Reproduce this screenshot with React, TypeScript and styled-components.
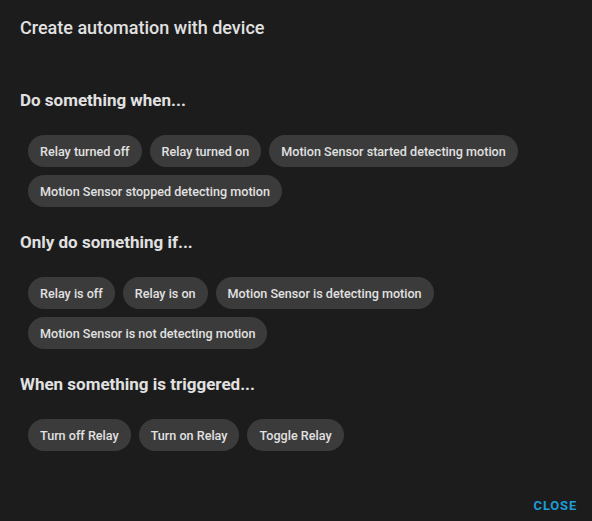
import styled, { createGlobalStyle } from 'styled-components';

const GlobalStyle = createGlobalStyle`
  html, body {
    margin: 0;
    padding: 0;
    background: #1c1c1c;
  }
  * {
    box-sizing: border-box;
  }
`;

const sections = [
  {
    title: 'Do something when...',
    items: [
      'Relay turned off',
      'Relay turned on',
      'Motion Sensor started detecting motion',
      'Motion Sensor stopped detecting motion',
    ],
  },
  {
    title: 'Only do something if...',
    items: [
      'Relay is off',
      'Relay is on',
      'Motion Sensor is detecting motion',
      'Motion Sensor is not detecting motion',
    ],
  },
  {
    title: 'When something is triggered...',
    items: ['Turn off Relay', 'Turn on Relay', 'Toggle Relay'],
  },
];

const App = () => {
  return (
    <Dialog>
      <GlobalStyle />
      <Title>Create automation with device</Title>
      <Content>
        {sections.map((section) => (
          <Section key={section.title}>
            <SectionTitle>{section.title}</SectionTitle>
            <ChipSet>
              {section.items.map((item) => (
                <Chip key={item}>{item}</Chip>
              ))}
            </ChipSet>
          </Section>
        ))}
      </Content>
      <Footer>
        <CloseButton>Close</CloseButton>
      </Footer>
    </Dialog>
  );
};

const Dialog = styled.div`
  display: flex;
  flex-direction: column;
  min-height: 100vh;
  background: #1c1c1c;
  color: #e1e1e1;
  font-family: Roboto, 'Noto Sans', sans-serif;
`;

const Title = styled.h2`
  margin: 0;
  padding: 16px 20px 0;
  font-size: 18px;
  line-height: 24px;
  font-weight: 500;
  color: #e1e1e1;
`;

const Content = styled.div`
  display: flex;
  flex-direction: column;
  gap: 23px;
  padding: 48px 20px 0;
`;

const Section = styled.div`
  display: flex;
  flex-direction: column;
  gap: 23px;
`;

const SectionTitle = styled.h3`
  margin: 0;
  font-size: 17px;
  line-height: 24px;
  font-weight: 700;
  color: #e1e1e1;
`;

const ChipSet = styled.div`
  display: flex;
  flex-wrap: wrap;
  gap: 8px;
  padding-left: 8px;
`;

const Chip = styled.button`
  height: 32px;
  padding: 0 12px;
  border: none;
  border-radius: 16px;
  background: #3b3b3b;
  color: #e1e1e1;
  font-family: inherit;
  font-size: 12.6px;
  font-weight: 500;
  cursor: pointer;
`;

const Footer = styled.div`
  display: flex;
  justify-content: flex-end;
  margin-top: auto;
  padding: 0 7px 0 0;
`;

const CloseButton = styled.button`
  height: 32px;
  padding: 0 8px;
  border: none;
  background: transparent;
  color: #1e9bd7;
  font-family: inherit;
  font-size: 13px;
  font-weight: 700;
  letter-spacing: 0.8px;
  text-transform: uppercase;
  cursor: pointer;
`;

export default App;
